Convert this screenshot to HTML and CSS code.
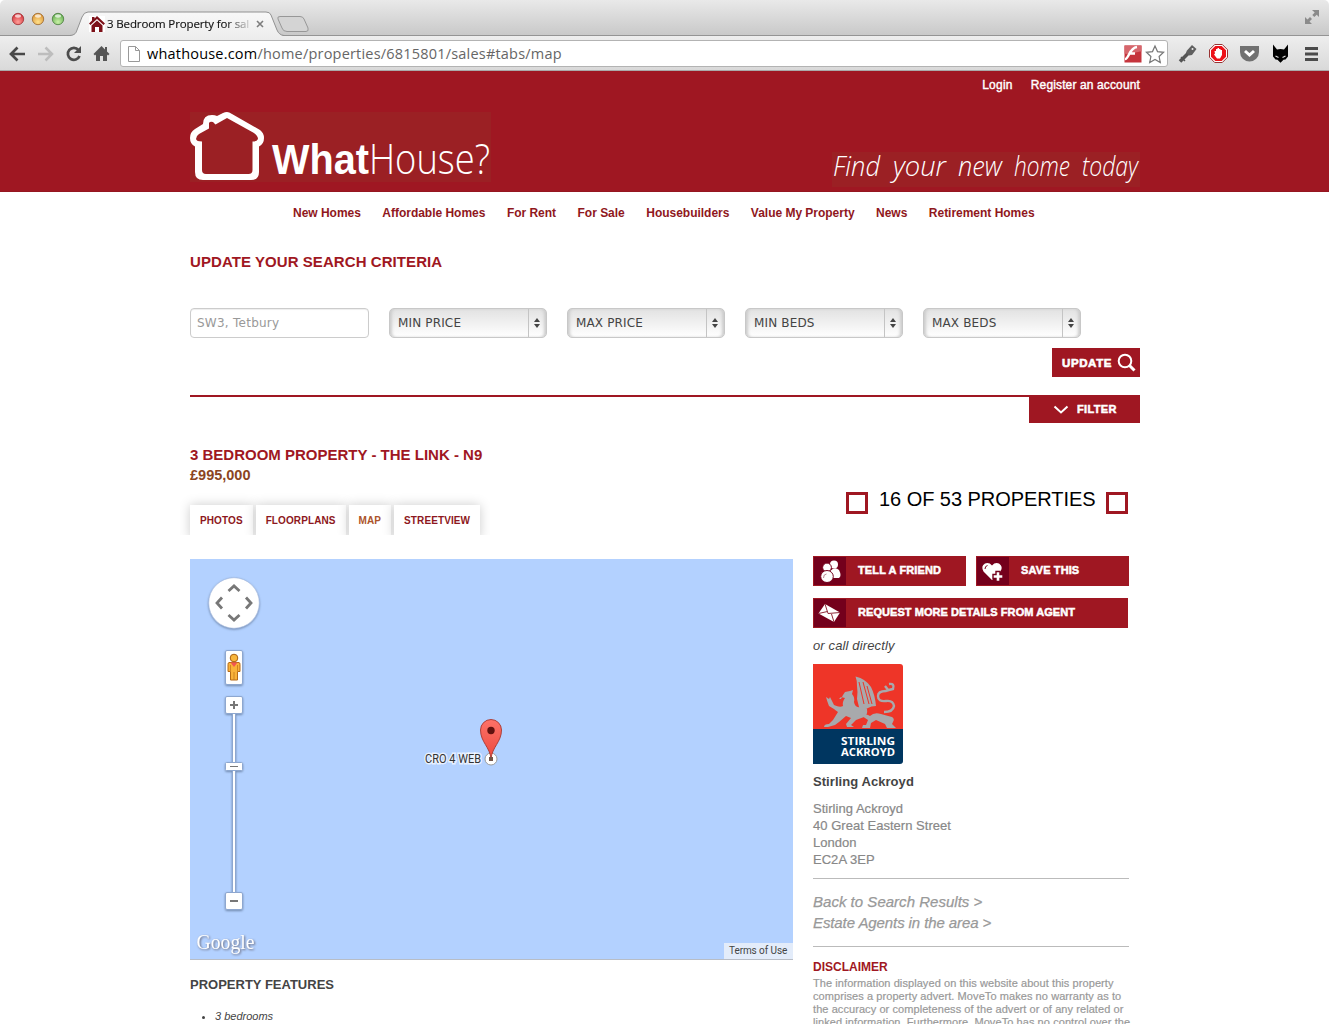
FILE: index.html
```html
<!DOCTYPE html>
<html lang="en">
<head>
<meta charset="utf-8">
<title>3 Bedroom Property for sale</title>
<link rel="stylesheet" href="styles.css">
</head>
<body>
<div class="browser">
  <div class="tabstrip">
    <svg class="strip-art" width="1329" height="36" viewBox="0 0 1329 36">
      <defs>
        <radialGradient id="r" cx=".5" cy=".75" r=".7"><stop offset="0" stop-color="#ff9e98"/><stop offset="1" stop-color="#d3323a"/></radialGradient>
        <radialGradient id="y" cx=".5" cy=".75" r=".7"><stop offset="0" stop-color="#ffe08a"/><stop offset="1" stop-color="#dc9637"/></radialGradient>
        <radialGradient id="g" cx=".5" cy=".75" r=".7"><stop offset="0" stop-color="#c9f0a6"/><stop offset="1" stop-color="#63ad50"/></radialGradient>
        <linearGradient id="tab" x2="0" y2="1"><stop offset="0" stop-color="#f8f8f8"/><stop offset="1" stop-color="#eee"/></linearGradient>
      </defs>
      <path d="M0 35.5H1329" stroke="#949494"/>
      <path d="M70 36C75 35 76 33 77 30L82 17Q84 12 88 12H266Q270 12 271 15L277 30Q279 35 284 36Z" fill="url(#tab)"/>
      <path d="M70 35.5C75 35 76 33 77 30L82 17Q84 12 88 12H266Q270 12 271 15L277 30Q279 35 284 35.500" fill="none" stroke="#929292"/>
      <path d="M280 16.500H300Q303 16.500 304 19L308 28Q309 31.500 306 31.500H287Q283 31.500 282 28L278 19Q277 16.500 280 16.500Z" fill="#d4d4d4" stroke="#979797"/>
      <g stroke-width=".8"><circle cx="18" cy="19" r="5.700" fill="url(#r)" stroke="#9d3033"/><circle cx="38" cy="19" r="5.700" fill="url(#y)" stroke="#9b672d"/><circle cx="58" cy="19" r="5.700" fill="url(#g)" stroke="#497b3e"/></g>
      <g fill="#fff" opacity=".7"><ellipse cx="18" cy="16" rx="3" ry="1.700"/><ellipse cx="38" cy="16" rx="3" ry="1.700"/><ellipse cx="58" cy="16" rx="3" ry="1.700"/></g>
      <path fill="#fff" d="M89 16h16v16H89z"/>
      <path fill="#7d1119" d="M97 16l8 7.500-1.500 1.500L97 19l-6.500 6L89 23.500l3-3V17h2.500v1.500zM97 20.500l5.500 5V32H99v-5h-4v5h-3.500v-6.500z"/>
      <path d="M257 21l6 6M263 21l-6 6" stroke="#7d7d7d" stroke-width="1.600"/>
      <path fill="#8b8b8b" d="M1312 10h7v7l-2.300-2.300-2.400 2.300-2-2 2.400-2.400zM1305 17v7h7l-2.500-2.500 2.500-2.400-2-2-2.500 2.400z"/>
    </svg>
    <span class="tab-title">3 Bedroom Property for sal</span>
  </div>
  <div class="toolbar">
    <svg class="nav-icons" width="120" height="35" viewBox="0 36 120 35">
      <path d="M25 54H11M17.500 47.500L11 54l6.500 6.500" fill="none" stroke="#484848" stroke-width="2.700"/>
      <path d="M38 54h14M45.500 47.500L52 54l-6.500 6.500" fill="none" stroke="#bdbdbd" stroke-width="2.500"/>
      <path d="M78.500 50A6 6 0 1 0 79.500 56" fill="none" stroke="#4c4c4c" stroke-width="2.700"/><path d="M81 46v7h-7z" fill="#4c4c4c"/>
      <path d="M101.500 46l8 8-1.500 1.500-1-1V61h-4v-5h-3v5h-4v-6.500l-1 1-1.500-1.500zM105 47h2v5l-2-2z" fill="#555"/>
    </svg>
    <div class="omnibox">
      <svg width="14" height="18" viewBox="0 0 14 18"><path d="M1.500 1.500h7l4 4v11h-11zM8.500 1.500v4h4" fill="#fff" stroke="#999"/></svg>
      <span class="url"><b>whathouse.com</b>/home/properties/6815801/sales#tabs/map</span>
      <svg width="44" height="20" viewBox="0 0 44 20"><rect x="1.500" y="1.500" width="17" height="17" fill="#c5343c"/><path d="M1.500 1.500h17v6c-6 0-9 4-17 2z" fill="#d6666c"/><path d="M2 15c4 0 4-11 12-12M6.500 9.500H12" fill="none" stroke="#fff" stroke-width="2.500"/><path d="M32 2l2.500 5.600 6.100.7-4.500 4.200 1.200 6-5.300-3-5.300 3 1.200-6-4.500-4.200 6.100-.7z" fill="#fff" stroke="#777" stroke-width="1.200"/></svg>
    </div>
    <svg class="ext-icons" width="161" height="35" viewBox="1168 36 161 35">
      <path d="M1180 61.500l9-9" stroke="#555" stroke-width="3.500"/><path d="M1187 50.500l5-5.500 4.500 4-4.500 6-3 .5-3-3z" fill="#606060"/><circle cx="1192.500" cy="49" r="1" fill="#eee"/><path d="M1181 57l4 4" stroke="#555" stroke-width="1.500"/>
      <path d="M1214.700 44.500h7.600l5.200 5.200v7.600l-5.200 5.200h-7.600l-5.200-5.200v-7.600z" fill="#fff" stroke="#933"/><path d="M1215.300 46h6.400l4.300 4.300v6.400l-4.300 4.300h-6.400l-4.300-4.300v-6.400z" fill="#ed1118"/><path d="M1214.500 51h1.500v-2h1.500v-1h1.500v1h1.500v1h1.500v5l-2 3.500h-3l-3-4 1-1z" fill="#fff"/>
      <path d="M1240 46h19v6a9.500 9.500 0 0 1-19 0z" fill="#717171"/><path d="M1245 51l4.500 4 4.500-4" fill="none" stroke="#fff" stroke-width="3"/>
      <path d="M1273 44.500l4 5q3.500-1 7 0l4-5v12l-2.500 3-2 .2-3 3-3-3-2-.2-2.500-3z" fill="#000"/><path d="M1275.500 56l3 1.500M1285.500 56l-3 1.500" stroke="#ddd" stroke-width="1.200"/>
      <path d="M1305 48.500h13M1305 54h13M1305 59.500h13" stroke="#4b4b4b" stroke-width="2.800"/>
    </svg>
  </div>
</div>

<header class="header">
  <div class="wrap">
    <div class="account"><a class="login">Login</a><a class="register">Register an account</a></div>
    <div class="brand">
      <svg class="logo" width="301" height="70" viewBox="0 0 301 70">
        <path fill-rule="evenodd" d="M37 0Q39 0 42 2L70 18Q74 21 74 26Q74 32 69 34.500V60Q69 68 61 68H13Q5 68 5 60V34.500Q0 32 0 26Q0 20 5 17L13 12Q13 3 22 3Q25 3 27 4L33 1Q35 0 37 0ZM37 6L64 21Q68 24 68 27Q67 29.500 62.500 29.500V58Q62.500 62 58.500 62H16Q12 62 12 58V29.500Q6.500 29.500 6 27Q6 24 9 22L19 16.500V11Q20 9 23 10L25.500 12.500Z"/>
        <text class="logo-bold" x="82" y="62" textLength="97" lengthAdjust="spacingAndGlyphs">What</text>
        <text class="logo-light" x="179" y="62" textLength="121" lengthAdjust="spacingAndGlyphs">House?</text>
      </svg>
      <svg class="tagline" width="308" height="35" viewBox="0 0 308 35">
        <text x="1" y="24" textLength="47" lengthAdjust="spacingAndGlyphs">Find</text><text x="61" y="24" textLength="53" lengthAdjust="spacingAndGlyphs">your</text><text x="126" y="24" textLength="44" lengthAdjust="spacingAndGlyphs">new</text><text x="182" y="24" textLength="56" lengthAdjust="spacingAndGlyphs">home</text><text x="250" y="24" textLength="56" lengthAdjust="spacingAndGlyphs">today</text>
      </svg>
    </div>
  </div>
</header>

<nav class="nav"><a>New Homes</a><a>Affordable Homes</a><a>For Rent</a><a>For Sale</a><a>Housebuilders</a><a>Value My Property</a><a>News</a><a>Retirement Homes</a></nav>

<main class="wrap">
  <h2 class="criteria">UPDATE YOUR SEARCH CRITERIA</h2>
  <div class="fields">
    <div class="field">SW3, Tetbury</div>
    <div class="select"><span>MIN PRICE</span><i></i></div>
    <div class="select"><span>MAX PRICE</span><i></i></div>
    <div class="select"><span>MIN BEDS</span><i></i></div>
    <div class="select"><span>MAX BEDS</span><i></i></div>
  </div>
  <div class="update"><span>UPDATE</span><svg width="19" height="19" viewBox="0 0 19 19"><circle cx="8" cy="8" r="6.300" fill="none" stroke="#fff" stroke-width="2"/><path d="M12.500 12.500l5 5" stroke="#fff" stroke-width="3"/></svg></div>
  <div class="filter-row"><div class="filter"><svg width="16" height="10" viewBox="0 0 16 10"><path d="M1.500 1.500L8 7.500l6.500-6" fill="none" stroke="#fff" stroke-width="2"/></svg><span>FILTER</span></div></div>

  <div class="columns">
    <section class="left">
      <h1 class="title">3 BEDROOM PROPERTY - THE LINK - N9</h1>
      <div class="price">£995,000</div>
      <div class="tabs"><a>PHOTOS</a><a>FLOORPLANS</a><a class="active">MAP</a><a>STREETVIEW</a></div>
      <div class="map">
        <svg width="603" height="401" viewBox="190 559 603 401">
          <defs>
            <filter id="s" x="-30%" y="-30%" width="160%" height="170%"><feDropShadow dx="0" dy="1" stdDeviation="1" flood-color="#536789" flood-opacity=".7"/></filter>
            <linearGradient id="pin" x2="0" y2="1"><stop offset="0" stop-color="#fd7268"/><stop offset="1" stop-color="#ed493e"/></linearGradient>
          </defs>
          <circle cx="234" cy="603" r="25.300" fill="#fff" stroke="#9fb6dc" stroke-width=".6" filter="url(#s)"/>
          <path d="M228.500 591l5.500-5 5.500 5M228.500 615l5.500 5 5.500-5M222 597.500l-5 5.500 5 5.500M246 597.500l5 5.500-5 5.500" fill="none" stroke="#777" stroke-width="2.800"/>
          <g fill="#fff" stroke="#8da7d0" filter="url(#s)">
            <path d="M232.500 711h3v184h-3z"/>
            <rect x="225.500" y="650.500" width="17" height="34" rx="1.500"/><rect x="225.500" y="696.500" width="17" height="17" rx="1.500"/><rect x="225.500" y="762.500" width="17" height="8" rx="1"/><rect x="225.500" y="892.500" width="17" height="17" rx="1.500"/>
          </g>
          <path d="M230 705h8M234 701v8M230 901h8" stroke="#777" stroke-width="2"/><path d="M230 766.500h8" stroke="#777"/>
          <path d="M229 662.500h10q1 0 1 2v7h-2.500V680h-7v-8.500H228v-7q0-2 1-2z" fill="#f9b239" stroke="#b66a16"/><path d="M230.500 665v6M237.500 665v6M234 672v8" stroke="#c57a1c" stroke-width=".8"/><circle cx="234" cy="658" r="3.800" fill="#f8b63c" stroke="#a95f10"/><path d="M230.500 662.500h7l-3.500 4.500z" fill="#f25553"/>
          <text class="google" x="196.500" y="949" textLength="58" lengthAdjust="spacingAndGlyphs">Google</text>
          <circle cx="491" cy="759" r="6" fill="#fff" stroke="#9b9b9b"/>
          <path d="M491 759C490 747 480.500 742 480.500 730a10.500 10.500 0 0 1 21 0C501.500 742 492 747 491 759z" fill="url(#pin)" stroke="#a8352e" stroke-width=".9"/>
          <circle cx="491" cy="730.500" r="3.700" fill="#61120f"/><path d="M489 757h4v4h-4z" fill="#735447"/>
          <text class="place" x="425" y="763" textLength="56" lengthAdjust="spacingAndGlyphs">CRO 4 WEB</text>
        </svg>
        <span class="terms">Terms of Use</span>
      </div>
      <h3 class="features">PROPERTY FEATURES</h3>
      <ul class="feature-list"><li>3 bedrooms</li></ul>
    </section>

    <aside class="side">
      <div class="pager"><i></i><span>16 OF 53 PROPERTIES</span><i></i></div>
      <div class="actions">
        <a class="action"><svg width="32" height="28" viewBox="0 0 32 28"><g fill="#fff"><circle cx="20" cy="7.500" r="4"/><path d="M16 14q5-5 9-1 3 6 0 8h-7z"/><g stroke="#74001c"><circle cx="13" cy="10.500" r="4.400"/><ellipse cx="13" cy="19.500" rx="6.300" ry="6"/></g></g><path d="M9.500 21q0-4 3-4" fill="none" stroke="#b98a95"/></svg><span>TELL A FRIEND</span></a>
        <a class="action"><svg width="32" height="28" viewBox="0 0 32 28"><path d="M15 23L6.500 14.500Q3.500 9 8 6.500q4-1.500 7 2 3-3.500 7-2 4.500 3 1.500 8z" fill="#fff"/><path d="M8 12q0-3 2.500-3.500" fill="none" stroke="#74001c"/><path d="M19 14.500h4v3h3v4h-3v3h-4v-3h-3v-4h3z" fill="#fff" stroke="#74001c" stroke-width="1.400"/></svg><span>SAVE THIS</span></a>
        <a class="action wide"><svg width="32" height="28" viewBox="0 0 32 28"><path d="M11 5L26 13.500 20 23 4.500 14.500z" fill="#fff"/><path d="M11 5l3 9.500L26 13.500M4.500 14.500l9-2M20 23l-2.500-8" fill="none" stroke="#8e2838"/></svg><span>REQUEST MORE DETAILS FROM AGENT</span></a>
      </div>
      <p class="call">or call directly</p>
      <svg class="agent-logo" width="90" height="100" viewBox="0 0 90 100">
        <path d="M0 0h87q3 0 3 3v62H0z" fill="#ee3528"/><path d="M0 65h90v32q0 3-3 3H0z" fill="#003660"/>
        <g fill="#a8a9ac">
          <path d="M42.500 12.500Q53 15 58 23q4 8 5 19-5 0-8 2l-4 2-5-3-2-8q1-7 0-13 0-6-1.500-9.500z"/>
          <path d="M28 35l2-4 2-3 5-1 3-1-1 4q3 3 2 8 1 6 6 5 4-1 7 2 1 6-3 8l-8 3-5 5 3 2h-7l-1-3 5-6-5-2-7 6-4 3-7 2h-4q0-3 5-3l4-4 5-8q-3-2-4-3l-5-3q-2-5-3-9l3 2 1-2 2 4 2 4q6 3 9 1-1-4 2-8l-4-1-2 2z"/>
          <path d="M49 52q4-3 8 0 4-4 11-2 7 2 11 3 3 2 1 5l-1 2 4 4h-9l-2-4-9-4-5 3-1 5h-8l1-3h3l2-5z"/>
        </g>
        <path d="M46 18l5 22M50 18l6 22M54 22l5 18" stroke="#ee3528"/>
        <path d="M76 20q6-1 4 5-5 1-7 2-8 0-8 5 0 6 8 5 7-1 8 5-1 6-10 6M72 22l4 5" fill="none" stroke="#a8a9ac" stroke-width="2.400"/>
        <text class="logo-name" x="28" y="81" textLength="54" lengthAdjust="spacingAndGlyphs">STIRLING</text><text class="logo-name" x="28" y="92" textLength="54" lengthAdjust="spacingAndGlyphs">ACKROYD</text>
      </svg>
      <h4 class="agent">Stirling Ackroyd</h4>
      <address class="address">Stirling Ackroyd<br>40 Great Eastern Street<br>London<br>EC2A 3EP</address>
      <div class="links"><a>Back to Search Results &gt;</a><a class="area">Estate Agents in the area &gt;</a></div>
      <h5 class="disclaimer">DISCLAIMER</h5>
      <p class="legal">The information displayed on this website about this property<br>comprises a property advert. MoveTo makes no warranty as to<br>the accuracy or completeness of the advert or of any related or<br>linked information. Furthermore, MoveTo has no control over the</p>
    </aside>
  </div>
</main>
</body>
</html>
```
FILE: styles.css
```css
* { box-sizing: border-box; }
html, body { margin: 0; height: 1024px; overflow: hidden; }
body { background: #fff; font-family: "Liberation Sans", Arial, sans-serif; color: #444; }
h1, h2, h3, h4, h5, p, ul { margin: 0; padding: 0; }
svg { display: block; flex: none; }
a, span { white-space: nowrap; }
.wrap { width: 950px; margin-left: 190px; }

.browser { height: 71px; }
.tabstrip { position: relative; height: 36px; background: linear-gradient(#e9e9e9, #c8c8c8); border-radius: 5px 5px 0 0; }
.tab-title { position: absolute; left: 107px; top: 16px; width: 144px; overflow: hidden; font: 11.5px/16px "Open Sans", sans-serif; letter-spacing: -.13px; color: transparent; background: linear-gradient(90deg, #111 82%, #ddd 100%); background-clip: text; -webkit-background-clip: text; -webkit-text-stroke: .15px transparent; }
.toolbar { display: flex; height: 35px; background: linear-gradient(#eee, #d9d9d9); border-bottom: 1px solid #aaa; }
.omnibox { display: flex; align-items: center; width: 1048px; height: 27px; margin-top: 4px; padding: 0 0 0 6px; background: #fff; border: 1px solid #b3b3b3; border-radius: 3px; }
.url { flex: 1; margin-left: 6px; font: 14.5px/20px "Open Sans", sans-serif; color: #666; letter-spacing: .2px; }
.url b { font-weight: 400; color: #000; }

.header { height: 121px; background: #9f1722; border-bottom: 1px solid #951620; }
.account { display: flex; justify-content: flex-end; gap: 18px; height: 41px; padding-top: 7px; font-size: 12px; line-height: 14px; color: #fff; -webkit-text-stroke: .4px #fff; }
.login { letter-spacing: .25px; }
.register { letter-spacing: .13px; }
.brand { display: flex; justify-content: space-between; align-items: flex-start; }
.logo { background: #9b2024; fill: #fff; }
.logo-bold { font: bold 43px "Liberation Sans Narrow", "Liberation Sans", sans-serif; }
.logo-light { font: 300 43px "Open Sans", sans-serif; }
.tagline { margin-top: 40px; background: #9b2024; fill: #fff; font: italic 300 27px "Open Sans", sans-serif; }

.nav { display: flex; gap: 21.5px; height: 60px; padding: 14px 0 0 293px; font-size: 12px; font-weight: bold; line-height: 14px; color: #8f1720; letter-spacing: -.02px; }

.criteria { padding-top: 1px; height: 56px; font-size: 15px; line-height: 18px; color: #9f1722; letter-spacing: .07px; }
.fields { display: flex; gap: 20px; height: 30px; font: 12px/28px "DejaVu Sans", sans-serif; }
.field { width: 179px; padding-left: 6px; border: 1px solid #ccc; border-radius: 4px; color: #999; box-shadow: inset 0 1px 1px #eee; letter-spacing: .25px; }
.select { display: flex; width: 158px; border: 1px solid #c8c8c8; border-radius: 5px; background: linear-gradient(#e2e2e2, #fff); box-shadow: inset 3px 0 3px -1px #ccc, inset -3px 0 3px -1px #ccc; color: #444; letter-spacing: .15px; }
.select span { flex: 1; padding-left: 8px; }
.select i { display: flex; flex-direction: column; justify-content: center; align-items: center; gap: 2px; width: 18px; padding-right: 2px; border-left: 1px solid #c4c4c4; }
.select i::before, .select i::after { content: ""; border: 3px solid transparent; }
.select i::before { border-top: 0; border-bottom: 4px solid #444; }
.select i::after { border-bottom: 0; border-top: 4px solid #444; }
.update { display: flex; align-items: center; justify-content: space-between; width: 88px; height: 29px; margin: 10px 0 18px auto; padding: 0 4px 0 10px; background: #9f1722; color: #fff; font-size: 11.5px; font-weight: bold; letter-spacing: .6px; -webkit-text-stroke: .6px #fff; }
.filter-row { height: 28px; border-top: 2px solid #9f1722; }
.filter { display: flex; align-items: center; gap: 8px; width: 111px; height: 26px; margin-left: auto; padding: 0 0 2px 24px; background: #9f1722; color: #fff; font-size: 11px; font-weight: bold; letter-spacing: .35px; -webkit-text-stroke: .5px #fff; }
.filter svg { margin-top: 2px; }

.columns { display: flex; gap: 20px; }
.left { width: 603px; padding-top: 22px; }
.title { height: 20px; font-size: 15px; line-height: 20px; color: #9f1722; white-space: nowrap; }
.price { height: 40px; font-size: 14.5px; line-height: 20px; color: #8b4421; font-weight: bold; }
.tabs { display: flex; gap: 3px; height: 54px; width: 310px; margin-left: -10px; padding: 0 0 0 10px; clip-path: inset(-12px 0 24px 0); font-size: 10px; font-weight: bold; line-height: 31px; color: #8d1720; letter-spacing: .1px; }
.tabs a { height: 34px; padding: 0 10px; background: #fff; box-shadow: 0 0 12px #ccc; }
.tabs .active { color: #ac542a; }
.map { position: relative; height: 401px; background: #b3d1ff; border-bottom: 1px solid #b8bdc6; }
.google { font: 20px "Liberation Serif", serif; fill: #fff; filter: drop-shadow(1px 1px 1px #667); }
.place { font: 12px Roboto, sans-serif; fill: #333; stroke: #fff; stroke-opacity: .7; stroke-width: 3px; paint-order: stroke; }
.terms { position: absolute; right: 0; bottom: 0; width: 69px; height: 16px; padding-left: 5px; background: #e3ecfa; font: 10px/15px Roboto, sans-serif; color: #444; letter-spacing: -.08px; }
.features { margin-top: 17px; font-size: 13px; line-height: 16px; color: #444; }
.feature-list { margin-top: 16px; padding-left: 25px; font-size: 11px; line-height: 15px; font-style: italic; }

.side { width: 316px; padding-top: 65px; }
.pager { display: flex; gap: 11px; height: 68px; padding-left: 33px; color: #000; font-size: 20px; line-height: 22px; }
.pager i { width: 22px; height: 22px; margin-top: 4px; border: 3px solid #9f1722; flex: none; }
.pager span { width: 216px; letter-spacing: -.05px; }
.actions { display: flex; flex-wrap: wrap; gap: 12px 10px; }
.action { display: flex; width: 153px; height: 30px; background: #9f1722; border: 1px solid #9f1722; color: #fff; font-size: 11px; font-weight: bold; line-height: 27px; letter-spacing: .12px; -webkit-text-stroke: .5px #fff; }
.action svg { background: #74001c; }
.action span { margin-left: 12px; }
.wide { width: 315px; letter-spacing: .06px; }
.call { margin: 10px 0; font-size: 13px; line-height: 16px; font-style: italic; letter-spacing: .13px; }
.logo-name { font: bold 10.5px "Open Sans", sans-serif; fill: #fff; }
.agent { margin: 10px 0; font-size: 13px; line-height: 16px; letter-spacing: .06px; }
.address { font-size: 13px; line-height: 17px; font-style: normal; color: #888; height: 79px; border-bottom: 1px solid #bbb; letter-spacing: .03px; -webkit-text-stroke: .2px #888; }
.links { display: flex; flex-direction: column; height: 68px; padding-top: 12px; border-bottom: 1px solid #bbb; color: #999; font-size: 15px; line-height: 21px; font-style: italic; letter-spacing: .02px; -webkit-text-stroke: .25px #999; }
.area { letter-spacing: -.1px; }
.disclaimer { margin-top: 12px; font-size: 12px; line-height: 17px; color: #9f1722; }
.legal { margin-top: 1px; font-size: 11px; line-height: 13px; color: #999; white-space: nowrap; letter-spacing: .075px; -webkit-text-stroke: .2px #999; }
```
